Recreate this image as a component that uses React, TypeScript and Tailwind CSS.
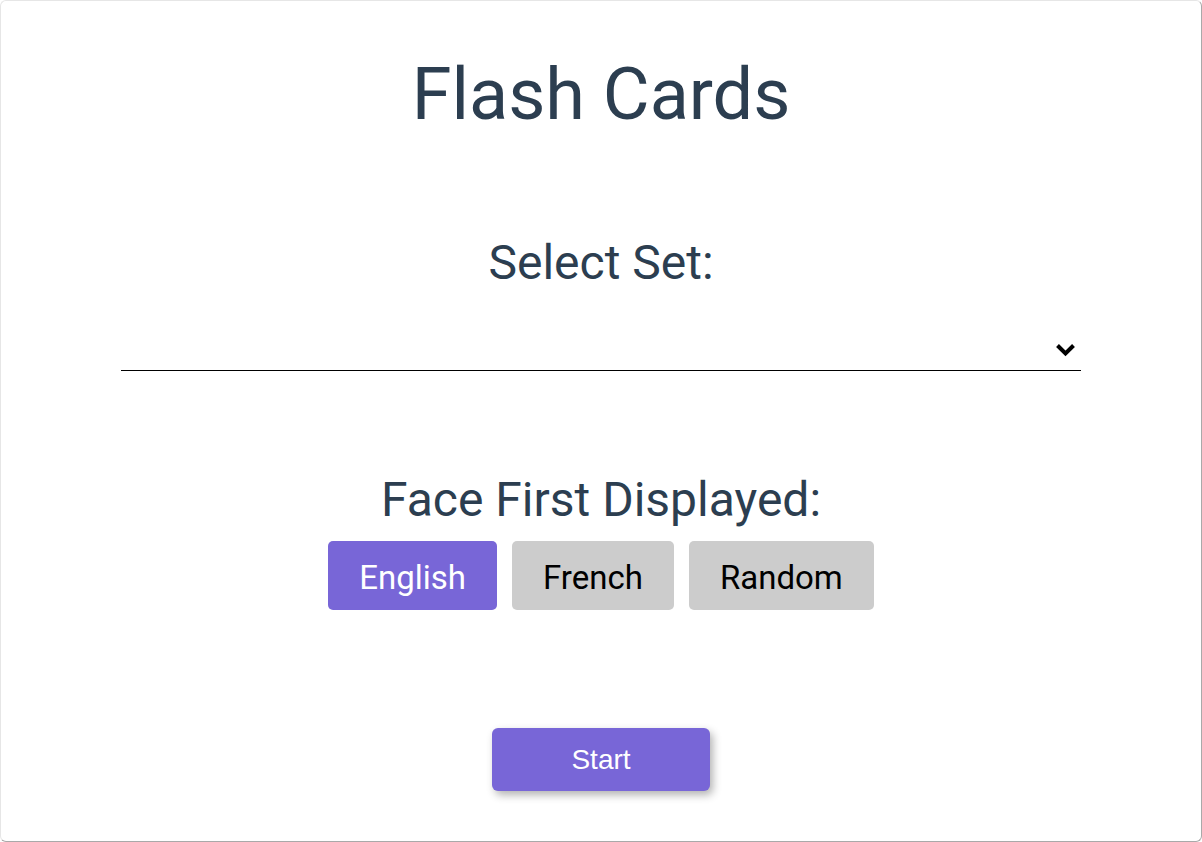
import React from 'react';

type Face = 'English' | 'French' | 'Random';

const FACES: Face[] = ['English', 'French', 'Random'];

const App: React.FC = () => {
    const [face, setFace] = React.useState<Face>('English');
    const [set, setSet] = React.useState('');

    return (
        <div className="w-[1202px] h-[842px] bg-white font-['Roboto',sans-serif] text-[#2c3e50]">
            {/* Card */}
            <div className="w-[1202px] h-[842px] rounded-[6px] border border-[#e6e6e6] border-r-[#a9a9a9] border-b-[#a9a9a9] flex flex-col items-center">
                <h1 className="mt-[52px] text-[72px] leading-[84px] font-normal">Flash Cards</h1>

                <h2 className="mt-[98px] text-[48px] leading-[56px] font-normal">Select Set:</h2>

                <div className="relative mt-[39px] w-[960px] h-[41px]">
                    <select
                        value={set}
                        onChange={(e) => setSet(e.target.value)}
                        className="appearance-none w-full h-full bg-transparent border-b border-black outline-none text-[20px] px-2 cursor-pointer"
                    >
                        <option value=""></option>
                        <option value="basics">Basics</option>
                        <option value="food">Food</option>
                    </select>
                    <svg className="absolute right-[5px] top-[13px] pointer-events-none" width="21" height="14" viewBox="0 0 21 14">
                        <path d="M2.5 2.5 L10.5 10.5 L18.5 2.5" fill="none" stroke="#000" strokeWidth="4" strokeLinecap="butt" strokeLinejoin="miter" />
                    </svg>
                </div>

                <h2 className="mt-[101px] text-[48px] leading-[56px] font-normal">Face First Displayed:</h2>

                <div className="mt-[13px] flex gap-[15px]">
                    {FACES.map((f) => (
                        <button
                            key={f}
                            onClick={() => setFace(f)}
                            className={`h-[69px] px-[31px] pt-[3px] rounded-[5px] text-[33px] leading-none ${face === f ? 'bg-[#7866d7] text-white' : 'bg-[#cccccc] text-black'}`}
                        >
                            {f}
                        </button>
                    ))}
                </div>

                <button className="mt-[118px] w-[218px] h-[63px] rounded-[6px] bg-[#7866d7] text-white text-[28px] font-['Liberation_Sans',Arial,sans-serif] shadow-[3px_4px_8px_rgba(0,0,0,0.3)]">
                    Start
                </button>
            </div>
        </div>
    );
};

export default App;
